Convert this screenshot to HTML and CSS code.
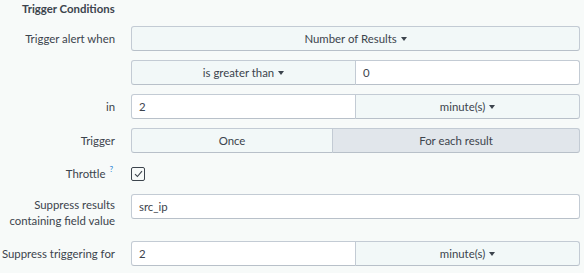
FILE: index.html
```html
<!DOCTYPE html>
<html>
<head>
<meta charset="utf-8">
<link rel="stylesheet" href="styles.css">
</head>
<body>
<div class="panel">
  <div class="title">Trigger Conditions</div>
  <div class="form">
    <div class="label">Trigger alert when</div>
    <div class="control">
      <div class="btn full">Number of Results <span class="caret"></span></div>
    </div>

    <div class="label"></div>
    <div class="control group">
      <div class="btn half left">is greater than <span class="caret"></span></div>
      <div class="input half right">0</div>
    </div>

    <div class="label">in</div>
    <div class="control group">
      <div class="input half left">2</div>
      <div class="btn half right">minute(s) <span class="caret"></span></div>
    </div>

    <div class="label">Trigger</div>
    <div class="control group">
      <div class="btn once left">Once</div>
      <div class="btn each right active">For each result</div>
    </div>

    <div class="label throttle-label">Throttle <sup class="help">?</sup></div>
    <div class="control check-wrap">
      <span class="checkbox">
        <svg width="9" height="8" viewBox="0 0 9 8"><path d="M1 4.2 L3.4 6.5 L8 1.2" fill="none" stroke="#3c444d" stroke-width="1.1"/></svg>
      </span>
    </div>

    <div class="label two-line">Suppress results<br>containing field value</div>
    <div class="control">
      <div class="input full-input">src_ip</div>
    </div>

    <div class="label last">Suppress triggering for</div>
    <div class="control group last">
      <div class="input half left">2</div>
      <div class="btn half right">minute(s) <span class="caret"></span></div>
    </div>
  </div>
</div>
</body>
</html>
```
FILE: styles.css
```css
html, body {
  margin: 0;
  padding: 0;
  background: #f7faf9;
}
body {
  font-family: "Lato", "Open Sans", sans-serif;
  font-size: 11.4px;
  color: #3c444d;
  width: 584px;
  height: 273px;
  overflow: hidden;
}
.title {
  margin-left: 22px;
  line-height: 18px;
  font-weight: bold;
  font-size: 11.4px;
}
.form {
  margin-top: 8px;
  display: grid;
  grid-template-columns: 115px 449px;
  column-gap: 16px;
  row-gap: 9px;
}
.label {
  text-align: right;
  line-height: 25px;
  white-space: nowrap;
}
.control {
  display: flex;
  height: 25px;
}
.btn, .input {
  box-sizing: border-box;
  height: 25px;
  line-height: 23px;
  border: 1px solid #c3cbd4;
  border-bottom-color: #b8c0c9;
}
.btn {
  background: #f2f8f8;
  text-align: center;
  border-radius: 3px;
}
.input {
  background: #ffffff;
  padding-left: 7px;
  border-radius: 3px;
}
.full { width: 449px; }
.full-input { width: 449px; }
.half { width: 225px; }
.group .left {
  border-top-right-radius: 0;
  border-bottom-right-radius: 0;
}
.group .right {
  border-top-left-radius: 0;
  border-bottom-left-radius: 0;
  margin-left: -1px;
}
.once { width: 202px; }
.each { width: 248px; }
.btn.active {
  background: #e1e6eb;
}
.caret {
  display: inline-block;
  width: 0;
  height: 0;
  border-left: 3px solid transparent;
  border-right: 3px solid transparent;
  border-top: 4px solid #3c444d;
  vertical-align: middle;
  margin-left: 1px;
  margin-top: -2px;
}
.throttle-label {
  line-height: 23px;
  padding-right: 2px;
}
.help {
  color: #1a7ed4;
  font-size: 8px;
  vertical-align: top;
  line-height: 14px;
  margin-left: 1px;
}
.check-wrap {
  height: 23px;
  align-items: center;
}
.checkbox {
  box-sizing: border-box;
  width: 14px;
  height: 14px;
  border: 1px solid #3c444d;
  border-radius: 2px;
  display: flex;
  align-items: center;
  justify-content: center;
  background: #f7faf9;
}
.two-line {
  line-height: 16px;
  padding-top: 3px;
}
.last {
  margin-top: 3px;
}
```
